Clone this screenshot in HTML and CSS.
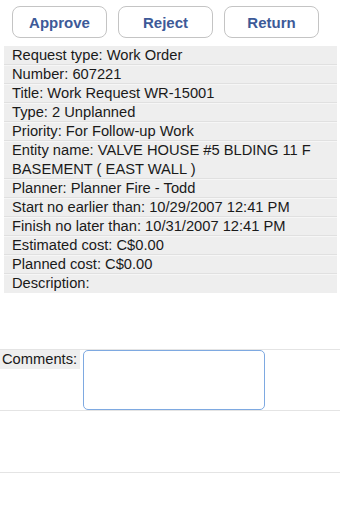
FILE: index.html
```html
<!DOCTYPE html>
<html lang="en">
<head>
  <meta charset="UTF-8">
  <meta name="viewport" content="width=device-width, initial-scale=1.0">
  <title>Work Request</title>
  <link rel="stylesheet" href="styles.css">
</head>
<body>
  <div class="button-container">
    <button class="action">Approve</button>
    <button class="action">Reject</button>
    <button class="action">Return</button>
  </div>

  <div class="details">
    <div class="detail-row">Request type: Work Order</div>
    <div class="detail-row">Number: 607221</div>
    <div class="detail-row">Title: Work Request WR-15001</div>
    <div class="detail-row">Type: 2 Unplanned</div>
    <div class="detail-row">Priority: For Follow-up Work</div>
    <div class="detail-row">Entity name: VALVE HOUSE #5 BLDING 11 F BASEMENT ( EAST WALL )</div>
    <div class="detail-row">Planner: Planner Fire - Todd</div>
    <div class="detail-row">Start no earlier than: 10/29/2007 12:41 PM</div>
    <div class="detail-row">Finish no later than: 10/31/2007 12:41 PM</div>
    <div class="detail-row">Estimated cost: C$0.00</div>
    <div class="detail-row">Planned cost: C$0.00</div>
    <div class="detail-row">Description:</div>
  </div>

  <div class="comments-row">
    <label class="comments-label" for="comments">Comments:</label>
    <textarea id="comments" class="comments-box"></textarea>
  </div>
  <div class="empty-row"></div>
</body>
</html>
```

FILE: styles.css
```css
body {
  margin: 0;
  font-family: 'Liberation Sans', Arial, sans-serif;
  font-size: 14.7px;
  color: #1a1a1a;
  background-color: white;
}

.button-container {
  display: flex;
  gap: 11px;
  padding: 6px 0 0 12px;
}

.action {
  width: 95px;
  height: 32px;
  background-color: white;
  border: 1px solid #c4c4c4;
  border-radius: 8px;
  color: #3d5a98;
  font-family: 'Liberation Sans', Arial, sans-serif;
  font-size: 15px;
  font-weight: bold;
  padding: 0;
}

.details {
  margin: 8px 3px 0 4px;
  background-color: #eeeeee;
}

.detail-row {
  padding: 0 8px;
  line-height: 19px;
  box-shadow: inset 0 -1px 0 #e0e0e0, inset 0 1px 0 #f6f6f6;
}

.detail-row:first-child {
  box-shadow: inset 0 -1px 0 #e0e0e0;
}

.detail-row:last-child {
  box-shadow: inset 0 1px 0 #f6f6f6;
}

.comments-row {
  display: flex;
  align-items: flex-start;
  margin-top: 56px;
  border-top: 1px solid #e4e4e4;
  border-bottom: 1px solid #e4e4e4;
}

.comments-label {
  width: 80px;
  padding: 0 0 0 2px;
  box-sizing: border-box;
  line-height: 19px;
  background-color: #eeeeee;
}

.comments-box {
  width: 182px;
  height: 60px;
  margin: 0 0 0 3px;
  box-sizing: border-box;
  border: 1px solid #7ea9e1;
  border-radius: 5px;
  resize: none;
  outline: none;
}

.empty-row {
  height: 61px;
  border-bottom: 1px solid #e4e4e4;
}
```
